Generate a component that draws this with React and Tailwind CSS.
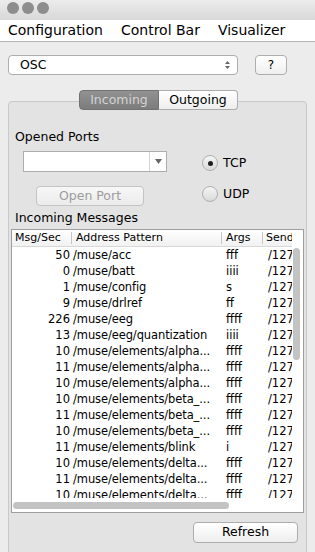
const rows = [
  ['50', '/muse/acc', 'fff'],
  ['0', '/muse/batt', 'iiii'],
  ['1', '/muse/config', 's'],
  ['9', '/muse/drlref', 'ff'],
  ['226', '/muse/eeg', 'ffff'],
  ['13', '/muse/eeg/quantization', 'iiii'],
  ['10', '/muse/elements/alpha...', 'ffff'],
  ['11', '/muse/elements/alpha...', 'ffff'],
  ['10', '/muse/elements/alpha...', 'ffff'],
  ['10', '/muse/elements/beta_...', 'ffff'],
  ['11', '/muse/elements/beta_...', 'ffff'],
  ['10', '/muse/elements/beta_...', 'ffff'],
  ['11', '/muse/elements/blink', 'i'],
  ['10', '/muse/elements/delta...', 'ffff'],
  ['11', '/muse/elements/delta...', 'ffff'],
  ['10', '/muse/elements/delta...', 'ffff'],
]

const font = "font-['Lucida_Grande','DejaVu_Sans',sans-serif]"

function Radio({ checked, label }) {
  return (
    <div className="flex items-center gap-[5px] h-[16px]">
      <div className="w-[16px] h-[16px] rounded-full border border-[#b0b0b0] bg-gradient-to-b from-[#f6f6f6] to-[#d9d9d9] flex items-center justify-center">
        {checked && <div className="w-[5px] h-[5px] rounded-full bg-[#1e1e1e]" />}
      </div>
      <span className="text-[12.5px] text-black">{label}</span>
    </div>
  )
}

export default function App() {
  return (
    <div className={`${font} w-[315px] h-[552px] bg-[#ececec] overflow-hidden flex flex-col`}>
      {/* title bar */}
      <div className="h-[20px] shrink-0 bg-gradient-to-b from-[#ececec] to-[#d8d8d8] flex items-start gap-[3px] pl-[7px] pt-[2px]">
        <div className="w-[12px] h-[12px] rounded-full bg-[#8d8d8d]" />
        <div className="w-[12px] h-[12px] rounded-full bg-[#8d8d8d]" />
        <div className="w-[12px] h-[12px] rounded-full bg-[#8d8d8d]" />
      </div>

      {/* menu bar */}
      <div className="h-[22px] shrink-0 bg-white border-b border-[#b5b5b5] flex items-center gap-[18px] pl-[8px] text-[14px] text-black">
        <span>Configuration</span>
        <span>Control Bar</span>
        <span>Visualizer</span>
      </div>

      {/* protocol row */}
      <div className="shrink-0 flex items-center gap-[17px] pl-[8px] pt-[13px]">
        <div className="w-[230px] h-[20px] bg-white border border-[#adadad] rounded-[4px] flex items-center justify-between pl-[11px] pr-[6px] text-[12.5px] text-black">
          <span>OSC</span>
          <svg width="7" height="10" viewBox="0 0 7 10">
            <path d="M1 4 L3.5 1 L6 4 Z" fill="#666" />
            <path d="M1 6 L3.5 9 L6 6 Z" fill="#666" />
          </svg>
        </div>
        <div className="w-[32px] h-[20px] bg-gradient-to-b from-white to-[#efefef] border border-[#adadad] rounded-[4px] flex items-center justify-center text-[12px] text-black">
          ?
        </div>
      </div>

      {/* tabbed panel */}
      <div className="shrink-0 mt-[15px] flex flex-col">
        <div className="relative z-10 flex pl-[79px]">
          <div className="w-[80px] h-[20px] bg-gradient-to-b from-[#929292] to-[#7c7c7c] border border-[#727272] rounded-l-[4px] flex items-center justify-center text-[12.5px] text-[#d4d4d4]">
            Incoming
          </div>
          <div className="w-[79px] h-[20px] bg-gradient-to-b from-white to-[#eeeeee] border border-l-0 border-[#adadad] rounded-r-[4px] flex items-center justify-center text-[12.5px] text-black">
            Outgoing
          </div>
        </div>

        <div className="mx-[8px] -mt-[9px] h-[460px] bg-[#e3e3e3] border border-[#c9c9c9] rounded-[4px] flex flex-col pt-[27px]">
          <div className="pl-[6px] text-[12.5px] text-black leading-[16px]">Opened Ports</div>

          <div className="flex mt-[6px]">
            <div className="flex flex-col pl-[14px] gap-[14px]">
              <div className="w-[144px] h-[21px] bg-white border border-[#adadad] flex items-stretch">
                <div className="flex-1" />
                <div className="w-[17px] border-l border-[#d2d2d2] flex items-center justify-center">
                  <svg width="7" height="5" viewBox="0 0 7 5">
                    <path d="M0 0 L7 0 L3.5 5 Z" fill="#666" />
                  </svg>
                </div>
              </div>
              <div className="ml-[13px] w-[108px] h-[20px] bg-gradient-to-b from-[#f7f7f7] to-[#ebebeb] border border-[#c4c4c4] rounded-[4px] flex items-center justify-center text-[12.5px] text-[#9c9c9c]">
                Open Port
              </div>
            </div>
            <div className="flex flex-col ml-[35px] pt-[4px] gap-[15px]">
              <Radio checked label="TCP" />
              <Radio label="UDP" />
            </div>
          </div>

          <div className="pl-[6px] mt-[4px] text-[12.5px] text-black leading-[16px]">Incoming Messages</div>

          {/* table */}
          <div className="mx-[2px] mt-[3px] h-[284px] bg-white border border-[#9f9f9f] flex overflow-hidden">
            <div className="w-[280px] flex flex-col overflow-hidden">
              <div className="h-[17px] shrink-0 bg-gradient-to-b from-white to-[#f1f1f1] border-b border-[#d8d8d8] flex text-[11px] text-black whitespace-nowrap">
                <div className="w-[60px] shrink-0 pl-[3px] border-r border-[#c6c6c6] my-[2px] leading-[12px]">Msg/Sec</div>
                <div className="w-[150px] shrink-0 pl-[4px] border-r border-[#c6c6c6] my-[2px] leading-[12px]">Address Pattern</div>
                <div className="w-[41px] shrink-0 pl-[4px] border-r border-[#c6c6c6] my-[2px] leading-[12px]">Args</div>
                <div className="shrink-0 pl-[3px] my-[2px] leading-[12px]">Sender</div>
              </div>

              <div className="relative flex-1 overflow-hidden">
                {rows.map(([n, addr, args], i) => (
                  <div key={i} className="h-[16px] flex text-[11.5px] text-black leading-[16px] whitespace-nowrap">
                    <div className="w-[58px] shrink-0 text-right">{n}</div>
                    <div className="w-[152px] shrink-0 pl-[3px] tracking-[-0.1px]">{addr}</div>
                    <div className="w-[41px] shrink-0 pl-[4px]">{args}</div>
                    <div className="shrink-0 pl-[5px]">/127.0.0.1</div>
                  </div>
                ))}
                {/* horizontal scrollbar */}
                <div className="absolute left-0 right-0 bottom-0 h-[14px] bg-white flex items-center pl-[1px]">
                  <div className="w-[216px] h-[7px] rounded-full bg-[#c3c3c3]" />
                </div>
              </div>
            </div>

            {/* vertical scrollbar */}
            <div className="flex-1 bg-white pl-[1px] pt-[18px]">
              <div className="w-[7px] h-[112px] rounded-full bg-[#c3c3c3]" />
            </div>
          </div>

          <div className="flex justify-end pr-[8px] mt-[9px]">
            <div className="w-[105px] h-[21px] bg-gradient-to-b from-white to-[#eeeeee] border border-[#adadad] rounded-[4px] flex items-center justify-center text-[12.5px] text-black">
              Refresh
            </div>
          </div>
        </div>
      </div>
    </div>
  )
}
